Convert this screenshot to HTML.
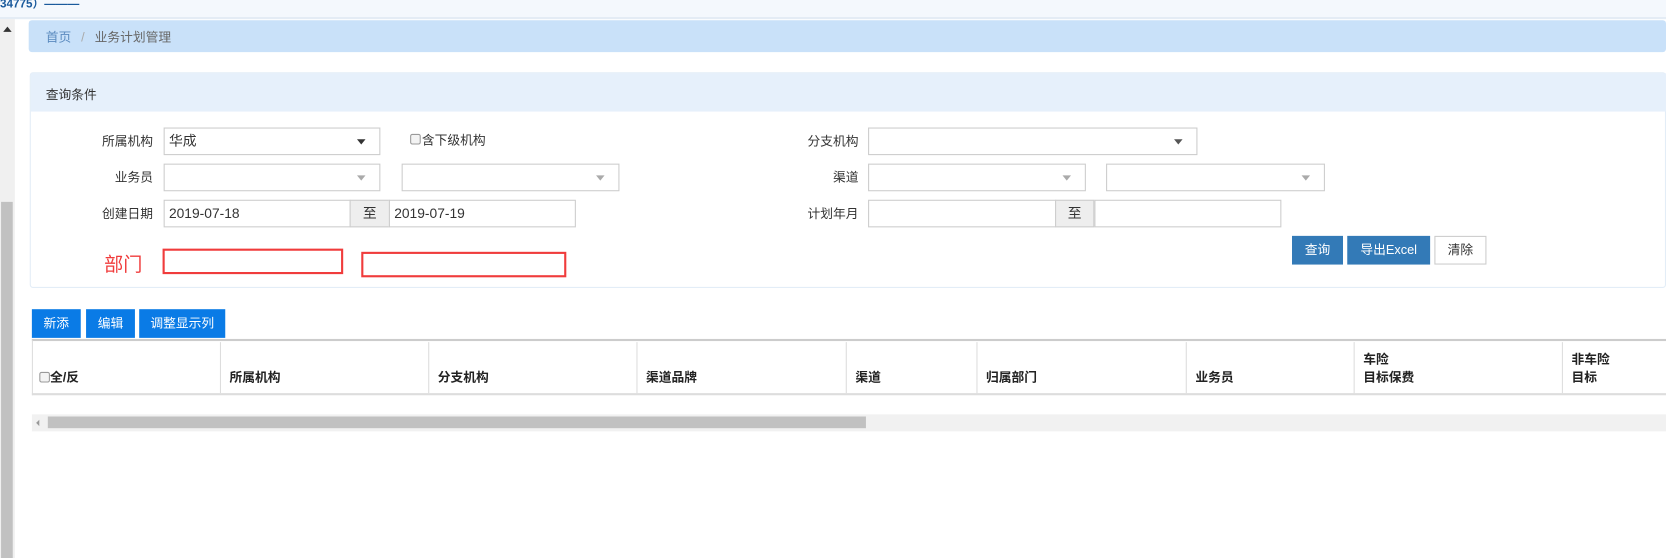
<!DOCTYPE html>
<html><head><meta charset="utf-8"><style>
*{box-sizing:border-box;margin:0;padding:0}
html,body{width:1666px;height:558px;overflow:hidden;background:#fff}
body{font-family:"Liberation Sans","Noto Sans CJK SC",sans-serif;font-size:12px;color:#333;position:relative}
#w{position:absolute;left:0;top:0;width:1568px;height:526px;transform:scale(1.0625);transform-origin:0 0}
.abs{position:absolute}
.inp{position:absolute;border:1px solid #ccc;background:#fff;height:26px;font-size:13px;padding:4px 4px;line-height:16px}
.arr{position:absolute;right:13px;top:10px;width:0;height:0;border-left:4px solid transparent;border-right:4px solid transparent;border-top:5px solid #333}
.arr.l{border-top-color:#aaa}
.lbl{position:absolute;font-size:12px;line-height:16px;color:#333;text-align:right;width:80px}
.addon{position:absolute;background:#eee;border:1px solid #ccc;height:26px;text-align:center;font-size:13px;line-height:16px;padding-top:4px}
.th{position:absolute;top:322px;height:48px;border-right:1px solid #ddd;font-weight:bold;font-size:12px;color:#222;padding:8px 8px 0}
.btn{position:absolute;color:#fff;font-size:12px;text-align:center;line-height:14px}
</style></head><body><div id="w">
<div class="abs" style="left:0;top:0;width:1568px;height:18px;background:#f4f8fd;border-bottom:2px solid #e4ecf5"></div>
<div class="abs" style="left:0;top:0;font-size:11px;color:#1a5a9c;font-weight:bold;line-height:9px">34775）———</div>
<div class="abs" style="left:0;top:18px;width:14px;height:510px;background:#f0f0f0"></div>
<div class="abs" style="left:1px;top:190px;width:11px;height:340px;background:#c1c1c1"></div>
<div class="abs" style="left:3px;top:25px;border-left:4px solid transparent;border-right:4px solid transparent;border-bottom:5px solid #333"></div>
<div class="abs" style="left:27px;top:19px;width:1541px;height:30px;background:#c9e1f9;border-radius:3px"></div>
<div class="abs" style="left:43px;top:26px;font-size:12px;color:#5b8bbf">首页 <span style="color:#aaa;margin:0 6px">/</span> <span style="color:#666">业务计划管理</span></div>
<div class="abs" style="left:28px;top:68px;width:1540px;height:203px;border:1px solid #e3edf7;border-radius:3px"></div>
<div class="abs" style="left:29px;top:69px;width:1539px;height:36px;background:#e6f0fb"></div>
<div class="abs" style="left:43px;top:80px;font-size:12px;color:#333">查询条件</div>
<div class="lbl" style="left:64px;top:125px">所属机构</div>
<div class="inp" style="left:154px;top:120px;width:204px">华成<span class="arr"></span></div>
<div class="abs" style="left:386px;top:126px;width:10px;height:10px;border:1px solid #999;border-radius:2px;background:#f3f3f3"></div>
<div class="abs" style="left:397px;top:124px;font-size:12px;line-height:16px">含下级机构</div>
<div class="lbl" style="left:64px;top:159px">业务员</div>
<div class="inp" style="left:154px;top:154px;width:204px"><span class="arr l"></span></div>
<div class="inp" style="left:378px;top:154px;width:205px"><span class="arr l"></span></div>
<div class="lbl" style="left:64px;top:193px">创建日期</div>
<div class="inp" style="left:154px;top:188px;width:176px">2019-07-18</div>
<div class="addon" style="left:329px;top:188px;width:38px">至</div>
<div class="inp" style="left:366px;top:188px;width:176px">2019-07-19</div>
<div class="abs" style="left:98px;top:235px;font-size:18px;color:#f03c3c">部门</div>
<div class="abs" style="left:153px;top:234px;width:170px;height:24px;border:2px solid #f03c3c"></div>
<div class="abs" style="left:340px;top:237px;width:193px;height:24px;border:2px solid #f03c3c"></div>
<div class="lbl" style="left:728px;top:125px">分支机构</div>
<div class="inp" style="left:817px;top:120px;width:310px"><span class="arr" style="border-top-color:#555"></span></div>
<div class="lbl" style="left:728px;top:159px">渠道</div>
<div class="inp" style="left:817px;top:154px;width:205px"><span class="arr l"></span></div>
<div class="inp" style="left:1041px;top:154px;width:206px"><span class="arr l"></span></div>
<div class="lbl" style="left:728px;top:193px">计划年月</div>
<div class="inp" style="left:817px;top:188px;width:177px"></div>
<div class="addon" style="left:993px;top:188px;width:37px">至</div>
<div class="inp" style="left:1030px;top:188px;width:176px"></div>
<div class="btn" style="left:1216px;top:222px;width:48px;height:27px;background:#337ab7;padding-top:6px">查询</div>
<div class="btn" style="left:1268px;top:222px;width:78px;height:27px;background:#337ab7;padding-top:6px">导出Excel</div>
<div class="btn" style="left:1350px;top:222px;width:49px;height:27px;border:1px solid #ccc;color:#333;padding-top:5px">清除</div>
<div class="btn" style="left:30px;top:291px;width:46px;height:27px;background:#0a7be6;padding-top:6px">新添</div>
<div class="btn" style="left:81px;top:291px;width:46px;height:27px;background:#0a7be6;padding-top:6px">编辑</div>
<div class="btn" style="left:131px;top:291px;width:81px;height:27px;background:#0a7be6;padding-top:6px">调整显示列</div>
<div class="abs" style="left:30px;top:319px;width:1538px;height:53px;border-top:2px solid #ccc;border-bottom:2px solid #ddd;border-left:1px solid #ddd"></div>
<div class="th" style="left:30px;width:178px;padding-top:24px;padding-left:7px"><span style="display:inline-block;width:10px;height:10px;border:1px solid #999;border-radius:2px;background:#f3f3f3;vertical-align:-1px"></span>全/反</div>
<div class="th" style="left:208px;width:196px;padding-top:24px">所属机构</div>
<div class="th" style="left:404px;width:196px;padding-top:24px">分支机构</div>
<div class="th" style="left:600px;width:197px;padding-top:24px">渠道品牌</div>
<div class="th" style="left:797px;width:123px;padding-top:24px">渠道</div>
<div class="th" style="left:920px;width:197px;padding-top:24px">归属部门</div>
<div class="th" style="left:1117px;width:158px;padding-top:24px">业务员</div>
<div class="th" style="left:1275px;width:196px;line-height:17px">车险<br>目标保费</div>
<div class="th" style="left:1471px;width:97px;line-height:17px;border-right:none">非车险<br>目标</div>
<div class="abs" style="left:30px;top:390px;width:1538px;height:16px;background:#f1f1f1"></div>
<div class="abs" style="left:45px;top:392px;width:770px;height:11px;background:#c1c1c1"></div>
<div class="abs" style="left:34px;top:395px;border-top:3px solid transparent;border-bottom:3px solid transparent;border-right:3px solid #999"></div>
</div></body></html>
